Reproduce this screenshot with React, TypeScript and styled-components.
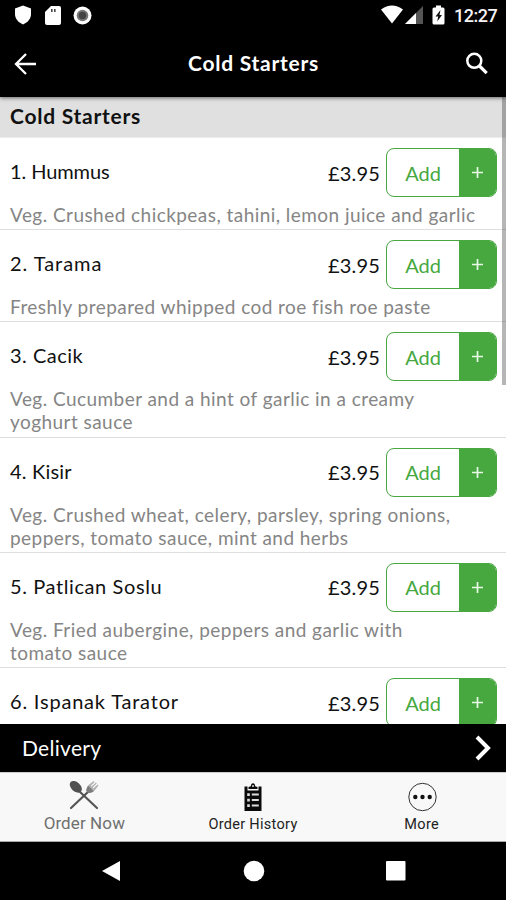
import React from "react";
import styled, { createGlobalStyle } from "styled-components";

const GlobalStyle = createGlobalStyle`
  * { box-sizing: border-box; }
  body { margin: 0; background: #000; }
  svg { display: block; flex: none; }
  button { font: inherit; border: 0; background: none; padding: 0; color: inherit; }
`;

const Screen = styled.div`
  width: 506px;
  height: 900px;
  display: flex;
  flex-direction: column;
  overflow: hidden;
  background: #fff;
  font-family: Lato, "Liberation Sans", sans-serif;
  color: #111;
`;

const StatusBar = styled.div`
  height: 32px;
  flex: none;
  display: flex;
  align-items: center;
  justify-content: space-between;
  padding: 0 9px 2px 14px;
  background: #000;
`;

const StatusGroup = styled.div`
  display: flex;
  align-items: center;
`;

const StatusIcons = styled(StatusGroup)`
  gap: 12.5px;
`;

const Clock = styled.span`
  margin-left: 8px;
  padding-top: 2px;
  width: 43px;
  white-space: nowrap;
  font: 500 18px/20px Roboto, sans-serif;
  letter-spacing: -0.5px;
  color: #f4f4f4;
`;

const AppBar = styled.header`
  height: 65px;
  flex: none;
  display: grid;
  grid-template-columns: 60px 1fr 60px;
  align-items: center;
  background: #000;
  color: #fff;
  box-shadow: 0 1px 4px rgba(0, 0, 0, 0.55);
  z-index: 1;
`;

const BarButton = styled.button<{ $end?: boolean }>`
  display: flex;
  justify-content: ${(p) => (p.$end ? "flex-end" : "flex-start")};
  padding: ${(p) => (p.$end ? "0 17px 2px 0" : "0 0 2px 14px")};
`;

const Title = styled.h1`
  margin: 0;
  padding: 0 0 4px 1px;
  text-align: center;
  font-size: 21px;
  line-height: 26px;
  font-weight: 700;
  letter-spacing: 0.75px;
`;

const Menu = styled.main`
  position: relative;
  flex: 1;
  min-height: 0;
  overflow: hidden;
  background: #fff;
`;

const ScrollThumb = styled.div`
  position: absolute;
  top: 0;
  right: 0;
  width: 4px;
  height: 288px;
  background: rgba(70, 70, 70, 0.4);
`;

const SectionTitle = styled.h2`
  margin: 0;
  height: 41px;
  padding-left: 10px;
  border-bottom: 1px solid #ededed;
  background: #e0e0e0;
  font-size: 21px;
  line-height: 38px;
  font-weight: 700;
  letter-spacing: 0.75px;
`;

const Item = styled.article<{ $lines: number }>`
  height: ${(p) => (p.$lines === 2 ? 115.3 : 92.2)}px;
  padding: 10px 9px 0 10px;
  border-bottom: 1.5px solid #dedede;
`;

const ItemHead = styled.div`
  height: 49px;
  display: flex;
  align-items: center;
`;

const Name = styled.h3<{ $tracking: number }>`
  margin: 0;
  flex: 1;
  padding-bottom: 3px;
  font-size: 20px;
  line-height: 24px;
  font-weight: 400;
  letter-spacing: ${(p) => p.$tracking}px;
`;

const Price = styled.span`
  width: 58px;
  font-size: 20px;
  line-height: 24px;
  letter-spacing: 0.2px;
`;

const AddButton = styled.button`
  width: 111px;
  height: 49px;
  display: flex;
  overflow: hidden;
  border: 1.5px solid #46a83f;
  border-radius: 8px;
  color: #46a83f;
  font-size: 20px;
`;

const AddLabel = styled.span`
  flex: 1;
  align-self: center;
  text-align: center;
`;

const AddPlus = styled.span`
  width: 37px;
  display: flex;
  align-items: center;
  justify-content: center;
  background: #46a83f;
`;

const Description = styled.p`
  margin: 0;
  padding-top: 6px;
  white-space: pre;
  font-size: 19px;
  line-height: 23.1px;
  letter-spacing: 0.45px;
  color: #858585;
`;

const DeliveryBar = styled.button`
  && {
    height: 48px;
    flex: none;
    display: flex;
    align-items: center;
    justify-content: space-between;
    padding: 0 15px 1px 22px;
    background: #000;
    color: #fff;
    font-size: 21px;
    letter-spacing: 0.3px;
  }
`;

const Tabs = styled.nav`
  height: 70px;
  flex: none;
  display: grid;
  grid-template-columns: repeat(3, 1fr);
  border-top: 1px solid #ccc;
  border-bottom: 1px solid #aaa;
  background: #f8f8f8;
  font-family: Roboto, sans-serif;
`;

const Tab = styled.button<{ $active?: boolean }>`
  && {
    display: flex;
    flex-direction: column;
    align-items: center;
    padding-top: ${(p) => (p.$active ? 7 : 9)}px;
    gap: ${(p) => (p.$active ? 1 : 3)}px;
    color: ${(p) => (p.$active ? "#707070" : "#222")};
    font-size: ${(p) => (p.$active ? 17 : 14.5)}px;
    line-height: ${(p) => (p.$active ? 22 : 20)}px;
    letter-spacing: ${(p) => (p.$active ? 0.1 : 0.3)}px;
  }
`;

const SystemNav = styled.div`
  height: 58px;
  flex: none;
  display: flex;
  align-items: center;
  justify-content: space-between;
  padding: 0 100px 0 101px;
  background: #000;
`;

const ITEMS = [
  { name: "1. Hummus", tracking: -0.1, text: ["Veg. Crushed chickpeas, tahini, lemon juice and garlic"] },
  { name: "2. Tarama", tracking: 0.95, text: ["Freshly prepared whipped cod roe fish roe paste"] },
  { name: "3. Cacik", tracking: 0.5, text: ["Veg. Cucumber and a hint of garlic in a creamy", "yoghurt sauce"] },
  { name: "4. Kisir", tracking: 0.2, text: ["Veg. Crushed wheat, celery, parsley, spring onions,", "peppers, tomato sauce, mint and herbs"] },
  { name: "5. Patlican Soslu", tracking: 0.6, text: ["Veg. Fried aubergine, peppers and garlic with", "tomato sauce"] },
  { name: "6. Ispanak Tarator", tracking: 0.8, text: [""] },
];

const ShieldIcon = () => (
  <svg width="18" height="20" viewBox="0 0 18 20">
    <path d="M9 .5 17 3.500V9c0 4.500-3 8.300-8 10.500C4 17.300 1 13.500 1 9V3.500Z" fill="#fff" />
  </svg>
);

const CardIcon = () => (
  <svg width="16" height="19" viewBox="0 0 16 19">
    <path d="M6 0h8a2 2 0 0 1 2 2v15a2 2 0 0 1-2 2H2a2 2 0 0 1-2-2V6Z" fill="#fff" />
    <path d="M6 3h1.600v3H6zM9 3h1.600v3H9z" fill="#444" />
  </svg>
);

const RecordIcon = () => (
  <svg width="19" height="19" viewBox="0 0 19 19">
    <circle cx="9.500" cy="9.500" r="9" fill="#fff" />
    <circle cx="9.500" cy="9.500" r="5.800" fill="#777" />
    <circle cx="9.500" cy="9.500" r="3.700" fill="#444" />
  </svg>
);

const SignalIcons = () => (
  <svg width="65" height="20" viewBox="0 0 65 20">
    <path d="M0 4.500Q11 -3.500 22 4.500L11 18.500Z" fill="#fff" />
    <path d="M24 19 42 1v18Z" fill="#555" />
    <path d="M24 19 35 8v11Z" fill="#fff" />
    <path d="M55 .5h5v2h2a1.500 1.500 0 0 1 1.500 1.500v14a1.500 1.500 0 0 1-1.500 1.500h-9a1.500 1.500 0 0 1-1.500-1.500V4A1.500 1.500 0 0 1 53 2.500h2Z" fill="#fff" />
    <path d="m59.500 5-5 6.500h2.700l-1 5 4.800-6.500h-2.500Z" fill="#111" />
  </svg>
);

const BackIcon = () => (
  <svg width="24" height="22" viewBox="0 0 24 22" fill="none" stroke="#fff" strokeWidth="2.300">
    <path d="M22 11H2M12 1 2 11l10 10" />
  </svg>
);

const SearchIcon = () => (
  <svg width="23" height="23" viewBox="0 0 23 23" fill="none" stroke="#fff">
    <circle cx="8.300" cy="8.800" r="7" strokeWidth="2.500" />
    <path d="m13 13.500 7.700 7.700" strokeWidth="3.200" />
  </svg>
);

const PlusIcon = () => (
  <svg width="11" height="11" viewBox="0 0 11 11" stroke="#e9f8e7" strokeWidth="1.700">
    <path d="M5.500 0v11M0 5.500h11" />
  </svg>
);

const ChevronIcon = () => (
  <svg width="16" height="26" viewBox="0 0 16 26" fill="none" stroke="#fff" strokeWidth="4">
    <path d="m2 2 11 11L2 24" />
  </svg>
);

const UtensilsIcon = () => (
  <svg width="30" height="31" viewBox="0 0 30 31">
    <g stroke="#555" strokeWidth="2.200" strokeLinecap="round">
      <path d="m10 11 18 17" />
      <path d="M20 11 2 28" />
    </g>
    <ellipse cx="6.800" cy="6.800" rx="7" ry="4.600" transform="rotate(43 6.800 6.800)" fill="#505050" />
    <path d="M17.300 11c0-3 1.500-5.500 3.500-7l4-3 .8 1-3.800 3.800.8.800L27 2.400l.8.800-4.300 4.500.8.800L28.500 4.600l1 .8-3.500 4.600c-1.500 2-4 3-6.500 3Z" fill="#b0b0b0" />
    <path d="M17.300 11c0-2 .7-3.800 2-5.200l5.400 5.400c-1.500 1.200-3.300 1.800-5.200 1.800Z" fill="#7c7c7c" />
  </svg>
);

const ClipboardIcon = () => (
  <svg width="20" height="30" viewBox="0 0 20 30">
    <path d="M1.500 4.500h3v4h11v-4h3V29h-17Z" fill="#0a0a0a" />
    <path d="M5.500 7V5l2.300-.8C8 2.500 8.700 1.200 10 1.200s2 1.300 2.200 3L14.500 5v2Z" fill="#0a0a0a" />
    <circle cx="10" cy="4" r=".9" fill="#f8f8f8" />
    <path d="M4.200 11.300h2.600v2.600H4.200zM4.200 16.800h2.600v2.600H4.200zM4.200 22.300h2.600v2.600H4.200zM8.800 11.600h7v2h-7zM8.800 17.100h7v2h-7zM8.800 22.600h7v2h-7z" fill="#ddd" />
  </svg>
);

const MoreIcon = () => (
  <svg width="30" height="30" viewBox="0 0 30 30">
    <circle cx="15.500" cy="15" r="13.700" fill="none" stroke="#333" strokeWidth="1" />
    <g fill="#111">
      <circle cx="8.300" cy="15" r="2.200" />
      <circle cx="15.500" cy="15" r="2.200" />
      <circle cx="22.700" cy="15" r="2.200" />
    </g>
  </svg>
);

export default function App() {
  return (
    <>
      <GlobalStyle />
      <Screen>
        <StatusBar>
          <StatusIcons>
            <ShieldIcon />
            <CardIcon />
            <RecordIcon />
          </StatusIcons>
          <StatusGroup>
            <SignalIcons />
            <Clock>12:27</Clock>
          </StatusGroup>
        </StatusBar>
        <AppBar>
          <BarButton aria-label="Back"><BackIcon /></BarButton>
          <Title>Cold Starters</Title>
          <BarButton $end aria-label="Search"><SearchIcon /></BarButton>
        </AppBar>
        <Menu>
          <SectionTitle>Cold Starters</SectionTitle>
          {ITEMS.map((item) => (
            <Item key={item.name} $lines={item.text.length}>
              <ItemHead>
                <Name $tracking={item.tracking}>{item.name}</Name>
                <Price>£3.95</Price>
                <AddButton>
                  <AddLabel>Add</AddLabel>
                  <AddPlus><PlusIcon /></AddPlus>
                </AddButton>
              </ItemHead>
              <Description>{item.text.join("\n")}</Description>
            </Item>
          ))}
          <ScrollThumb />
        </Menu>
        <DeliveryBar>
          Delivery
          <ChevronIcon />
        </DeliveryBar>
        <Tabs>
          <Tab $active><UtensilsIcon />Order Now</Tab>
          <Tab><ClipboardIcon />Order History</Tab>
          <Tab><MoreIcon />More</Tab>
        </Tabs>
        <SystemNav>
          <svg width="20" height="22" viewBox="0 0 20 22"><path d="M1 11 19 1v20Z" fill="#fff" /></svg>
          <svg width="22" height="22" viewBox="0 0 22 22"><circle cx="11" cy="11" r="10.300" fill="#fff" /></svg>
          <svg width="20" height="20" viewBox="0 0 20 20"><rect width="19.500" height="19.500" rx="1" fill="#fff" /></svg>
        </SystemNav>
      </Screen>
    </>
  );
}
